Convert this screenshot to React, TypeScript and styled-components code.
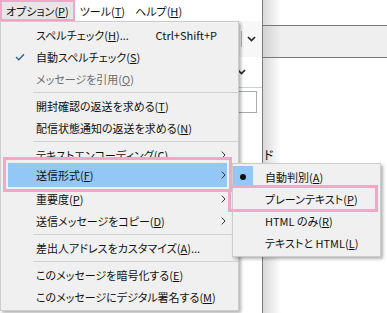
import React from 'react';
import styled, { createGlobalStyle } from 'styled-components';

const GlobalStyle = createGlobalStyle`
  html, body { margin: 0; padding: 0; }
  body {
    width: 387px;
    height: 313px;
    overflow: hidden;
    background: #fff;
    font-family: "Noto Sans CJK JP", "Noto Sans", sans-serif;
    font-size: 11px;
    color: #111;
    font-feature-settings: "palt";
  }
`;

const PINK = '#f2a6c8';

function Chevron() {
  return (
    <svg width="9" height="6" viewBox="0 0 9 6">
      <path d="M1 1 L4.5 4.5 L8 1" fill="none" stroke="#222" strokeWidth="1.6" />
    </svg>
  );
}

function Arrow() {
  return (
    <svg width="5" height="8" viewBox="0 0 5 8">
      <path d="M0.8 0.6 L4 4 L0.8 7.4" fill="none" stroke="#333" strokeWidth="1" />
    </svg>
  );
}

function Check() {
  return (
    <svg width="10" height="8" viewBox="0 0 10 8">
      <path d="M1 4 L3.8 6.8 L9 1.2" fill="none" stroke="#2f5f93" strokeWidth="1.3" />
    </svg>
  );
}

type Entry =
  | { kind: 'sep' }
  | { kind: 'item'; label: React.ReactNode; shortcut?: string; sub?: boolean; checked?: boolean; disabled?: boolean; annotated?: boolean };

const k = (t: string, key: string, tail = '') => (
  <>
    {t}(<u>{key}</u>){tail}
  </>
);

const entries: Entry[] = [
  { kind: 'item', label: k('スペルチェック', 'H', '...'), shortcut: 'Ctrl+Shift+P' },
  { kind: 'item', label: k('自動スペルチェック', 'S'), checked: true },
  { kind: 'item', label: k('メッセージを引用', 'Q'), disabled: true },
  { kind: 'sep' },
  { kind: 'item', label: k('開封確認の返送を求める', 'T') },
  { kind: 'item', label: k('配信状態通知の返送を求める', 'N') },
  { kind: 'sep' },
  { kind: 'item', label: k('テキストエンコーディング', 'C'), sub: true },
  { kind: 'item', label: k('送信形式', 'F'), sub: true, annotated: true },
  { kind: 'item', label: k('重要度', 'P'), sub: true },
  { kind: 'item', label: k('送信メッセージをコピー', 'D'), sub: true },
  { kind: 'sep' },
  { kind: 'item', label: k('差出人アドレスをカスタマイズ', 'A', '...') },
  { kind: 'sep' },
  { kind: 'item', label: k('このメッセージを暗号化する', 'E') },
  { kind: 'item', label: k('このメッセージにデジタル署名する', 'M') },
];

const subEntries = [
  { label: k('自動判別', 'A'), bullet: true },
  { label: k('プレーンテキスト', 'P'), annotated: true },
  { label: <>HTML のみ(<u>R</u>)</> },
  { label: <>テキストと HTML(<u>L</u>)</> },
];

export default function App() {
  return (
    <>
      <GlobalStyle />
      <Screen>
        <LeftPane>
          <MenuBar>
            <BarItem $open>{k('オプション', 'P')}</BarItem>
            <BarItem>{k('ツール', 'T')}</BarItem>
            <BarItem>{k('ヘルプ', 'H')}</BarItem>
          </MenuBar>
          <Toolbar>
            <SplitSep />
            <Chevron />
          </Toolbar>
          <FieldRow>
            <Chevron />
          </FieldRow>
          <InputRow>
            <FakeInput />
          </InputRow>
        </LeftPane>
        <RightPane>
          <Band />
          <Hint>ド</Hint>
        </RightPane>

        <Dropdown>
          {entries.map((e, i) => {
            if (e.kind === 'sep') return <Separator key={i} />;
            const row = (
              <Item key={i} $disabled={e.disabled} $active={e.annotated}>
                <IconCell $w={e.annotated ? 28 : 33}>{e.checked && <Check />}</IconCell>
                <Label>{e.label}</Label>
                {e.shortcut && <Shortcut>{e.shortcut}</Shortcut>}
                {e.sub && <ArrowCell><Arrow /></ArrowCell>}
              </Item>
            );
            return e.annotated ? <Annotated key={i}>{row}</Annotated> : row;
          })}
        </Dropdown>

        <Submenu>
          {subEntries.map((s, i) => (
            <SubItem key={i} $annotated={s.annotated}>
              <BulletCell $on={s.bullet}>{s.bullet && <Dot />}</BulletCell>
              <Label>{s.label}</Label>
            </SubItem>
          ))}
        </Submenu>
      </Screen>
    </>
  );
}

const Screen = styled.div`
  position: relative;
  width: 387px;
  height: 313px;
  display: flex;
  overflow: hidden;
`;

const LeftPane = styled.div`
  width: 262px;
  display: flex;
  flex-direction: column;
`;

const MenuBar = styled.div`
  height: 21px;
  display: flex;
  align-items: stretch;
  background: #fff;
`;

const BarItem = styled.div<{ $open?: boolean }>`
  display: flex;
  align-items: center;
  padding: 0 ${p => (p.$open ? '4px' : '5px')};
  margin-right: ${p => (p.$open ? '0' : '0')};
  background: ${p => (p.$open ? '#e6e6e6' : 'transparent')};
  border: ${p => (p.$open ? `2px solid ${PINK}` : 'none')};
  white-space: nowrap;
`;

const Toolbar = styled.div`
  height: 36px;
  display: flex;
  align-items: center;
  justify-content: flex-end;
  gap: 5px;
  padding-right: 6px;
  background: #f7f7f7;
`;

const SplitSep = styled.div`
  width: 1px;
  height: 16px;
  background: #b5b5b5;
`;

const FieldRow = styled.div`
  height: 30px;
  display: flex;
  align-items: center;
  justify-content: flex-end;
  padding-right: 16px;
  border-bottom: 1px solid #c8d0dc;
`;

const InputRow = styled.div`
  display: flex;
  justify-content: flex-end;
  padding: 3px 5px 0 0;
`;

const FakeInput = styled.div`
  width: 40px;
  height: 20px;
  border: 1px solid #aaa;
  background: #fff;
`;

const RightPane = styled.div`
  flex: 1;
  border-left: 1px solid #7c7c7c;
  background: linear-gradient(to right, #d9d9d9, #fff 18px);
  padding-top: 25px;
  display: flex;
  flex-direction: column;
`;

const Band = styled.div`
  height: 31px;
  border-top: 1px solid #777;
  border-bottom: 1px solid #777;
  background: linear-gradient(to right, #d2d2d2, #efefef 18px);
`;

const Hint = styled.div`
  margin: 88px 0 0 1px;
  font-size: 12px;
`;

const Dropdown = styled.div`
  position: absolute;
  left: 0;
  top: 21px;
  width: 235px;
  padding: 2px 0 2px 2px;
  background: #f0f0f0;
  border: 1px solid #cccccc;
  box-shadow: 2px 2px 3px rgba(0, 0, 0, 0.3);
`;

const Item = styled.div<{ $disabled?: boolean; $active?: boolean }>`
  display: flex;
  align-items: center;
  height: ${p => (p.$active ? '24px' : '22px')};
  padding-right: ${p => (p.$active ? '1px' : '12px')};
  background: ${p => (p.$active ? '#93c8f6' : 'transparent')};
  color: ${p => (p.$disabled ? '#6d6d6d' : '#111')};
  white-space: nowrap;
`;

const IconCell = styled.div<{ $w: number }>`
  width: ${p => p.$w}px;
  flex: none;
  display: flex;
  align-items: center;
  justify-content: center;
`;

const Label = styled.span`
  flex: 1;
`;

const Shortcut = styled.span`
  margin-right: 9px;
`;

const ArrowCell = styled.span`
  display: flex;
  align-items: center;
`;

const Separator = styled.div`
  height: 1px;
  margin: 2px 0 2px 30px;
  background: #d2d2d2;
`;

const Annotated = styled.div`
  position: relative;
  z-index: 1;
  margin: -9px 6px -4px 0;
  padding: 3px 2px 2px 2px;
  border: 3px solid ${PINK};
  background: #f0f0f0;
`;

const Submenu = styled.div`
  position: absolute;
  left: 232px;
  top: 163px;
  width: 147px;
  padding: 2px 0;
  background: #f0f0f0;
  border: 1px solid #cccccc;
  box-shadow: 2px 2px 3px rgba(0, 0, 0, 0.3);
`;

const SubItem = styled.div<{ $annotated?: boolean }>`
  position: relative;
  display: flex;
  align-items: center;
  height: 22px;
  white-space: nowrap;
  &::after {
    content: '';
    display: ${p => (p.$annotated ? 'block' : 'none')};
    position: absolute;
    left: -5px;
    right: 2px;
    top: -3px;
    bottom: -2px;
    border: 3px solid ${PINK};
  }
`;

const BulletCell = styled.div<{ $on?: boolean }>`
  width: 20px;
  height: 100%;
  margin-right: 12px;
  display: flex;
  align-items: center;
  justify-content: center;
  background: ${p => (p.$on ? '#93c8f6' : 'transparent')};
`;

const Dot = styled.div`
  width: 6px;
  height: 6px;
  border-radius: 50%;
  background: #111;
`;
